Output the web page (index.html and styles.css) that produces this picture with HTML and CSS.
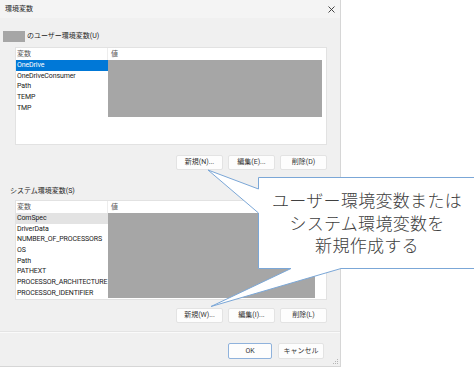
FILE: index.html
```html
<!DOCTYPE html>
<html lang="ja">
<head>
    <meta charset="UTF-8">
    <meta name="viewport" content="width=device-width, initial-scale=1.0">
    <title>環境変数</title>
    <link rel="stylesheet" href="styles.css">
</head>
<body>
    <div class="dialog">
        <div class="titlebar">
            <span class="title">環境変数</span>
            <svg class="close" viewBox="0 0 7 7"><path d="M0.5 0.5L6.5 6.5M6.5 0.5L0.5 6.5" stroke="#333" stroke-width="0.9"/></svg>
        </div>

        <div class="panel">
            <section class="group user">
                <div class="group-label"><span class="user-mask"></span>のユーザー環境変数(U)</div>
                <div class="list">
                    <div class="list-head"><span class="col-name">変数</span><span class="col-value">値</span></div>
                    <div class="list-body">
                        <ul class="names">
                            <li class="sel">OneDrive</li>
                            <li>OneDriveConsumer</li>
                            <li>Path</li>
                            <li>TEMP</li>
                            <li>TMP</li>
                        </ul>
                        <div class="values"></div>
                    </div>
                </div>
                <div class="buttons">
                    <button class="btn">新規(N)...</button>
                    <button class="btn">編集(E)...</button>
                    <button class="btn">削除(D)</button>
                </div>
            </section>

            <section class="group sys">
                <div class="group-label">システム環境変数(S)</div>
                <div class="list">
                    <div class="list-head"><span class="col-name">変数</span><span class="col-value">値</span></div>
                    <div class="list-body">
                        <ul class="names">
                            <li class="dim">ComSpec</li>
                            <li>DriverData</li>
                            <li>NUMBER_OF_PROCESSORS</li>
                            <li>OS</li>
                            <li>Path</li>
                            <li>PATHEXT</li>
                            <li>PROCESSOR_ARCHITECTURE</li>
                            <li>PROCESSOR_IDENTIFIER</li>
                        </ul>
                        <div class="values"></div>
                    </div>
                </div>
                <div class="buttons">
                    <button class="btn">新規(W)...</button>
                    <button class="btn">編集(I)...</button>
                    <button class="btn">削除(L)</button>
                </div>
            </section>
        </div>

        <div class="footer">
            <button class="btn ok">OK</button>
            <button class="btn cancel">キャンセル</button>
        </div>

        <svg class="grip" viewBox="0 0 6 6">
            <rect x="4" y="0" width="1" height="1" fill="#b5b5b5"/>
            <rect x="2" y="2" width="1" height="1" fill="#b5b5b5"/>
            <rect x="4" y="2" width="1" height="1" fill="#b5b5b5"/>
            <rect x="0" y="4" width="1" height="1" fill="#b5b5b5"/>
            <rect x="2" y="4" width="1" height="1" fill="#b5b5b5"/>
            <rect x="4" y="4" width="1" height="1" fill="#b5b5b5"/>
        </svg>
    </div>

    <div class="callout">
        <svg class="callout-shape" viewBox="0 0 474 369">
            <path d="M258.5 177.5H478V268.5H341L211 306.5L291 268.5H258.5V213L208 170L258.5 189Z" fill="#fff" stroke="#7ba7d7" stroke-width="1"/>
        </svg>
        <div class="callout-text">
            <span class="callout-line">ユーザー環境変数または</span>
            <span class="callout-line">システム環境変数を</span>
            <span class="callout-line">新規作成する</span>
        </div>
    </div>
</body>
</html>
```

FILE: styles.css
```css
body {
    margin: 0;
    width: 474px;
    height: 369px;
    overflow: hidden;
    position: relative;
    background-color: #fff;
    color: #1a1a1a;
    font-family: Roboto, "Noto Sans CJK JP", sans-serif;
    font-size: 7px;
}

.dialog {
    width: 340px;
    height: 366px;
    background-color: #f0f0f0;
    border-right: 1px solid #d6d6d6;
    border-bottom: 1px solid #d6d6d6;
    display: flex;
    flex-direction: column;
    position: relative;
}

.titlebar {
    height: 18px;
    flex-shrink: 0;
    display: flex;
    align-items: center;
    justify-content: space-between;
    padding: 0 5px 0 5px;
    background-color: #f4f4f4;
}

.title {
    color: #222;
    line-height: 18px;
}

.close {
    width: 7px;
    height: 7px;
}

.panel {
    flex: 1;
    padding: 0 13px 8px 0;
}

.group-label {
    height: 12px;
    line-height: 12px;
    display: flex;
    align-items: center;
    gap: 2px;
    color: #222;
}

.user .group-label {
    margin-top: 12px;
    padding-left: 3px;
}

.sys .group-label {
    margin-top: 15px;
    padding-left: 10px;
}

.user-mask {
    width: 22px;
    height: 11px;
    background-color: #a6a6a6;
}

.list {
    margin-left: 15px;
    background-color: #fff;
    border: 1px solid #e2e2e2;
    box-sizing: border-box;
    overflow: hidden;
}

.user .list {
    margin-top: 5px;
    height: 98px;
}

.sys .list {
    margin-top: 3px;
    height: 100px;
}

.list-head {
    display: flex;
    height: 12px;
    line-height: 12px;
    color: #555;
}

.col-name {
    width: 92px;
    padding-left: 1px;
    box-sizing: border-box;
    border-right: 1px solid #ededed;
}

.col-value {
    padding-left: 3px;
}

.list-body {
    display: flex;
    align-items: flex-start;
}

.names {
    list-style: none;
    margin: 0;
    padding: 0;
    width: 92px;
    flex-shrink: 0;
}

.names li {
    height: 10.7px;
    line-height: 10.7px;
    padding-left: 1px;
    white-space: nowrap;
    overflow: hidden;
    letter-spacing: -0.1px;
}

.names .sel {
    background-color: #0078d7;
    color: #fff;
}

.names .dim {
    background-color: #e3e3e3;
}

.values {
    flex: 1;
    background-color: #a6a6a6;
}

.user .values {
    height: 57px;
    margin-right: 4px;
}

.sys .values {
    height: 85px;
    margin-right: 11px;
}

.buttons {
    display: flex;
    justify-content: flex-end;
    gap: 5px;
    height: 15px;
}

.user .buttons {
    margin-top: 10px;
}

.sys .buttons {
    margin-top: 8px;
}

.btn {
    width: 47px;
    height: 15px;
    padding: 0;
    background-color: #fdfdfd;
    border: 1px solid #e3e3e3;
    border-radius: 2px;
    color: #333;
    font: inherit;
    line-height: 13px;
}

.footer {
    height: 35px;
    flex-shrink: 0;
    box-sizing: border-box;
    display: flex;
    justify-content: flex-end;
    gap: 6px;
    padding: 11px 16px 0 0;
    border-top: 1px solid #e4e4e4;
    box-shadow: inset 0 1px 0 #fafafa;
}

.footer .btn {
    height: 16px;
}

.ok {
    width: 44px;
    border-color: #8fb2dc;
}

.cancel {
    width: 46px;
}

.grip {
    position: absolute;
    right: 1px;
    bottom: 1px;
    width: 6px;
    height: 6px;
}

.callout {
    position: absolute;
    left: 0;
    top: 0;
    width: 474px;
    height: 369px;
    pointer-events: none;
}

.callout-shape {
    position: absolute;
    left: 0;
    top: 0;
    width: 474px;
    height: 369px;
}

.callout-text {
    position: absolute;
    left: 259px;
    top: 178px;
    width: 216px;
    height: 90px;
    display: flex;
    flex-direction: column;
    align-items: center;
    justify-content: center;
    font-family: "Noto Sans CJK JP", sans-serif;
    font-size: 17px;
    font-weight: 300;
    color: #404040;
    letter-spacing: 0.3px;
}

.callout-line {
    display: block;
    height: 22.5px;
    line-height: 22.5px;
}
```
